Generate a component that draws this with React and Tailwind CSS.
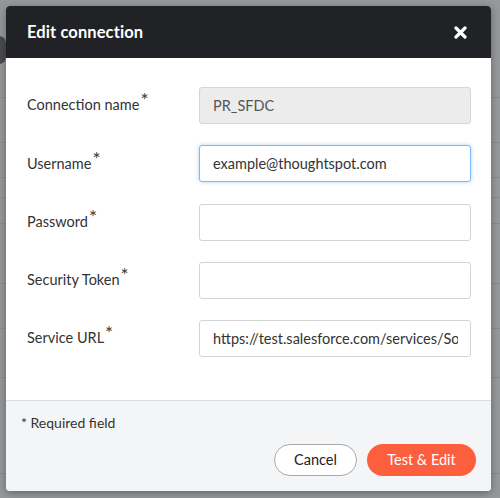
import { useState } from "react";

const fields = [
  { label: "Connection name", value: "PR_SFDC", disabled: true },
  { label: "Username", value: "example@thoughtspot.com", focused: true },
  { label: "Password", value: "", type: "password" },
  { label: "Security Token", value: "" },
  { label: "Service URL", value: "https://test.salesforce.com/services/Soap/u/41.0" },
];

const bgRows = [97, 142, 177, 197, 223, 283, 328, 377, 473];

function Field({ label, value, disabled, focused, type }) {
  const [val, setVal] = useState(value);

  let inputCls = "bg-white border-[#d3d3d3]";
  if (disabled) inputCls = "bg-[#ececec] border-[#d6d6d6] text-[#555]";
  if (focused) inputCls = "bg-white border-[#7db9f2] shadow-[0_0_4px_rgba(80,160,240,0.45)]";

  return (
    <div className="flex items-center h-[37px]">
      <label className="w-[172px] shrink-0 text-[14.5px] text-[#333] leading-none">
        {label}
        <sup className="text-[19px] relative -top-[3px] ml-[1px] text-[#3a3a3a]">*</sup>
      </label>
      <input
        type={type || "text"}
        value={val}
        disabled={disabled}
        onChange={(e) => setVal(e.target.value)}
        className={`flex-1 min-w-0 h-[37px] rounded-[3px] border pl-[13px] pr-[12px] text-[14.5px] text-[#333] outline-none ${inputCls}`}
      />
    </div>
  );
}

export default function App() {
  return (
    <div className="relative w-[500px] h-[498px] overflow-hidden bg-[#97989b]" style={{ fontFamily: "Lato, 'Open Sans', sans-serif" }}>
      {/* table behind the overlay */}
      {bgRows.map((y) => (
        <div key={y} className="absolute left-0 right-0 h-px bg-[#8b8c90]" style={{ top: y }} />
      ))}
      <div className="absolute -left-[8px] top-[36px] w-[14px] h-[28px] rounded-full bg-[#4a4b4f]" />

      {/* modal */}
      <div className="absolute left-[6px] top-[6px] w-[485px] h-[485px] rounded-[4px] overflow-hidden bg-white flex flex-col shadow-[0_2px_8px_rgba(0,0,0,0.35)]">
        <div className="h-[52px] shrink-0 bg-[#212226] flex items-center justify-between pl-[21px] pr-[24px]">
          <h2 className="text-white text-[16.5px] font-bold tracking-[0.1px]">Edit connection</h2>
          <button className="text-white">
            <svg width="13" height="13" viewBox="0 0 13 13">
              <path d="M2 2 L11 11 M11 2 L2 11" stroke="white" strokeWidth="3.2" strokeLinecap="round" />
            </svg>
          </button>
        </div>

        <div className="flex-1 flex flex-col gap-[21.3px] pl-[21px] pr-[20px] pt-[29px]">
          {fields.map((f) => (
            <Field key={f.label} {...f} />
          ))}
        </div>

        <div className="h-[91px] shrink-0 bg-[#f4f5f7] border-t border-[#dcdde0] flex flex-col px-[15px] pt-[12px]">
          <p className="text-[14px] leading-[20px] text-[#333]">* Required field</p>
          <div className="flex justify-end gap-[10px] mt-[11px]">
            <button className="w-[83px] h-[32px] rounded-full border border-[#a8a8a8] bg-white text-[14.5px] text-[#222]">
              Cancel
            </button>
            <button className="w-[109px] h-[32px] rounded-full bg-[#fd5e3d] text-[14.5px] text-white">
              Test &amp; Edit
            </button>
          </div>
        </div>
      </div>
    </div>
  );
}
